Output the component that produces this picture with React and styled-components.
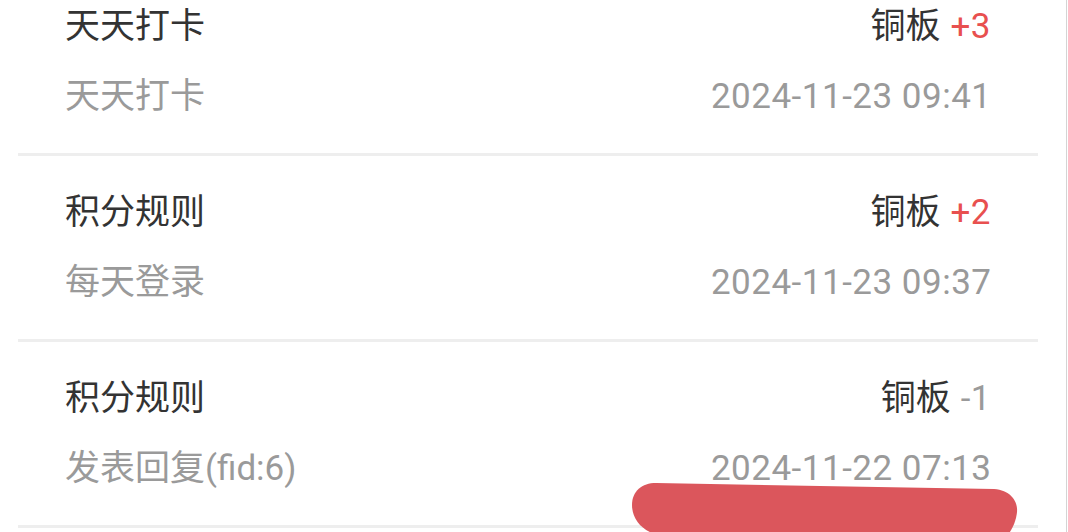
import React from 'react';
import styled, { createGlobalStyle } from 'styled-components';

const GlobalStyle = createGlobalStyle`
  html, body {
    margin: 0;
    padding: 0;
    background: #ffffff;
    overflow: hidden;
  }
  body {
    font-family: Roboto, "Noto Sans CJK SC", sans-serif;
  }
`;

const StyledPage = styled.div`
  position: relative;
  width: 1066px;
  height: 532px;
  overflow: hidden;
  border-right: 1px solid #d4d4d4;
  background: #ffffff;
`;

const StyledList = styled.ul`
  list-style: none;
  margin: -30px 28px 0 18px;
  padding: 0;
`;

const StyledItem = styled.li`
  display: flex;
  flex-direction: column;
  gap: 20px;
  height: 186px;
  box-sizing: border-box;
  padding: 32px 47px 0 47px;
  border-bottom: 3px solid #eeeeee;
`;

const StyledRow = styled.div`
  display: flex;
  justify-content: space-between;
  align-items: center;
  height: 50px;
  font-size: 35px;
  line-height: 50px;
  color: ${({ muted }) => (muted ? '#9a9a9a' : '#333333')};
`;

const StyledTime = styled.span`
  letter-spacing: 0.5px;
  margin-right: -0.5px;
`;

const StyledAmount = styled.span`
  margin-left: 10px;
  letter-spacing: 0.5px;
  color: ${({ positive }) => (positive ? '#e8504f' : '#9a9a9a')};
`;

const StyledMark = styled.svg`
  position: absolute;
  left: 628px;
  top: 479px;
  width: 395px;
  height: 56px;
`;

const records = [
  { title: '天天打卡', desc: '天天打卡', amount: '+3', time: '2024-11-23 09:41' },
  { title: '积分规则', desc: '每天登录', amount: '+2', time: '2024-11-23 09:37' },
  { title: '积分规则', desc: '发表回复(fid:6)', amount: '-1', time: '2024-11-22 07:13' },
];

const App = () => (
  <StyledPage>
    <GlobalStyle />
    <StyledList>
      {records.map((r, i) => (
        <StyledItem key={i}>
          <StyledRow>
            <span>{r.title}</span>
            <span>
              铜板
              <StyledAmount positive={r.amount.startsWith('+')}>{r.amount}</StyledAmount>
            </span>
          </StyledRow>
          <StyledRow muted>
            <span>{r.desc}</span>
            <StyledTime>{r.time}</StyledTime>
          </StyledRow>
        </StyledItem>
      ))}
    </StyledList>
    <StyledMark viewBox="0 0 395 56">
      <path
        d="M28 4 L366 10 C382 11 390 22 389 33 C388 43 384 50 380 56 L30 56 C14 52 4 40 4 26 C4 12 14 4 28 4 Z"
        fill="#db565c"
      />
    </StyledMark>
  </StyledPage>
);

export default App;
